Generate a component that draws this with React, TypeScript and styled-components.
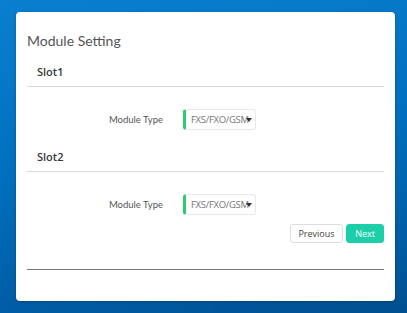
import React from 'react';
import styled, { createGlobalStyle } from 'styled-components';

const GlobalStyle = createGlobalStyle`
  html, body {
    margin: 0;
    padding: 0;
  }
  body {
    font-family: "Open Sans", "Noto Sans", sans-serif;
    background: linear-gradient(170deg, #0a7fcf 0%, #0070be 45%, #005da6 80%, #004f8f 100%);
    width: 407px;
    height: 313px;
    overflow: hidden;
  }
`;

const Page = styled.div`
  padding: 12px 12px 0 16px;
`;

const Card = styled.div`
  width: 379px;
  height: 289px;
  box-sizing: border-box;
  background: #fff;
  border-radius: 4px;
  box-shadow: 0 1px 3px rgba(0, 0, 0, 0.25);
  padding: 19px 11px 0 11px;
`;

const Title = styled.div`
  font-family: Lato, "Open Sans", sans-serif;
  font-size: 14px;
  color: #555;
  line-height: 20px;
  margin-bottom: 13px;
`;

const SlotHeader = styled.div`
  font-size: 11px;
  font-weight: 600;
  color: #383838;
  line-height: 16px;
  padding: 0 0 6px 10px;
  border-bottom: 1px solid #d9d9d9;
`;

const FormRow = styled.div`
  display: flex;
  align-items: center;
  height: 22px;
  margin-top: 21px;
`;

const Label = styled.div`
  width: 136px;
  text-align: right;
  font-family: Lato, "Open Sans", sans-serif;
  font-size: 9.5px;
  color: #555;
  padding-right: 20px;
`;

const Select = styled.div`
  position: relative;
  width: 73px;
  height: 21px;
  box-sizing: border-box;
  border: 1px solid #e8e8e8;
  border-left: 3px solid #2ecc71;
  border-radius: 3px;
  display: flex;
  align-items: center;
  padding-left: 5px;
  font-size: 9.5px;
  letter-spacing: -0.3px;
  color: #777;
  white-space: nowrap;
  overflow: hidden;
`;

const Caret = styled.span`
  position: absolute;
  right: 3px;
  top: 8px;
  width: 0;
  height: 0;
  border-left: 3px solid transparent;
  border-right: 3px solid transparent;
  border-top: 4px solid #333;
`;

const Slot2Header = styled(SlotHeader)`
  margin-top: 19px;
`;

const Actions = styled.div`
  display: flex;
  justify-content: flex-end;
  gap: 3px;
  margin-top: 9px;
`;

const Button = styled.button<{ $primary?: boolean }>`
  height: 19px;
  width: ${(p) => (p.$primary ? 38 : 53)}px;
  padding: 0;
  font-family: inherit;
  font-size: 9px;
  border-radius: 3px;
  cursor: pointer;
  border: 1px solid ${(p) => (p.$primary ? '#1ccfaa' : '#ddd')};
  background: ${(p) => (p.$primary ? '#1ccfaa' : '#fff')};
  color: ${(p) => (p.$primary ? '#fff' : '#444')};
`;

const Divider = styled.div`
  margin-top: 26px;
  border-top: 1px solid #777;
`;

const ModuleSelect: React.FC = () => (
  <Select>
    FXS/FXO/GSM
    <Caret />
  </Select>
);

export default function App() {
  return (
    <>
      <GlobalStyle />
      <Page>
        <Card>
          <Title>Module Setting</Title>
          <SlotHeader>Slot1</SlotHeader>
          <FormRow>
            <Label>Module Type</Label>
            <ModuleSelect />
          </FormRow>
          <Slot2Header>Slot2</Slot2Header>
          <FormRow>
            <Label>Module Type</Label>
            <ModuleSelect />
          </FormRow>
          <Actions>
            <Button>Previous</Button>
            <Button $primary>Next</Button>
          </Actions>
          <Divider />
        </Card>
      </Page>
    </>
  );
}
